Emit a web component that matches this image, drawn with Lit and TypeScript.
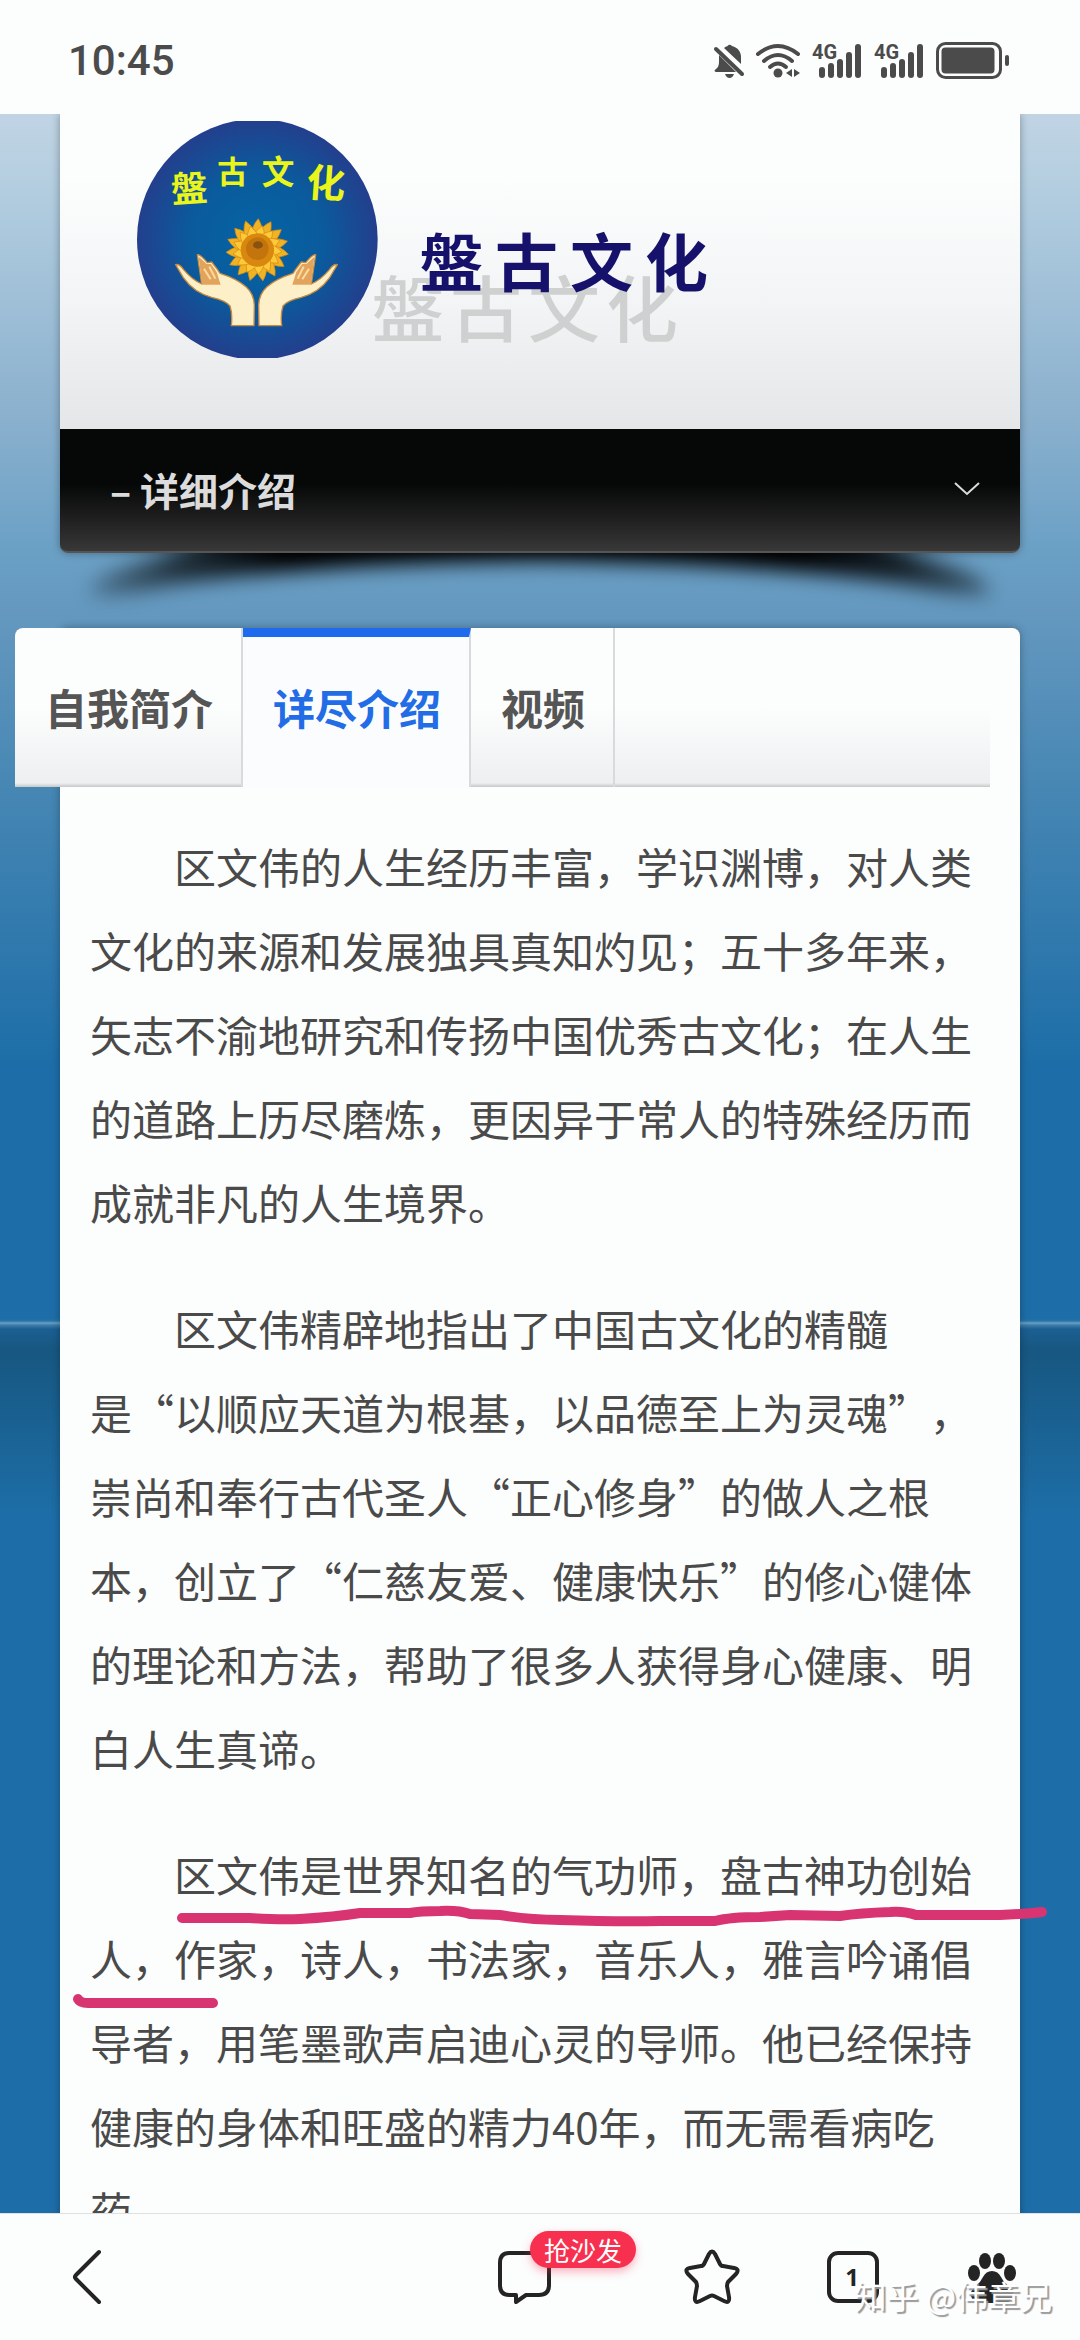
import { LitElement, html, css, svg } from "lit";
import { customElement, state } from "lit/decorators.js";
import { classMap } from "lit/directives/class-map.js";

const fontStack = css`"Noto Sans CJK SC", "Noto Sans", sans-serif`;

@customElement("status-bar")
class StatusBar extends LitElement {
  static styles = css`
    :host {
      display: flex;
      align-items: center;
      justify-content: space-between;
      box-sizing: border-box;
      height: 114px;
      padding: 8px 70px 0 68px;
      background: #fcfdfd;
      color: #4b4b4b;
    }
    .time {
      font: 500 42px/48px Roboto, sans-serif;
    }
    .icons {
      display: flex;
      align-items: center;
      gap: 12px;
    }
    .icons svg {
      display: block;
      overflow: visible;
      fill: #4b4b4b;
    }
    .net {
      font: 700 20px Roboto, sans-serif;
    }
  `;

  private signal() {
    return html`<svg width="50" height="36" viewBox="0 0 50 36" role="img" aria-label="4G">
      <text class="net" x="0" y="16">4G</text>
      <rect x="7" y="24" width="6" height="11" rx="3" />
      <rect x="16" y="20" width="6" height="15" rx="3" />
      <rect x="25" y="16" width="6" height="19" rx="3" />
      <rect x="34" y="9" width="6" height="26" rx="3" />
      <rect x="43" y="1" width="6" height="34" rx="3" />
    </svg>`;
  }

  render() {
    return html`
      <span class="time">10:45</span>
      <div class="icons">
        <svg width="30" height="36" viewBox="0 0 30 36" aria-hidden="true">
          <path d="M10 5 C12 3.500 13 3.200 13.500 3 Q15.500 0.500 18 3 C24 4.500 27 9 27 14 V21 Z" />
          <path d="M5 12 L22 29 H2 Q-1 28 2 26 Q5 24 5 19 Z" />
          <path d="M11 31 H20 Q18.500 35 15.500 35 Q12.500 35 11 31 Z" />
          <path d="M2 6 L28 31" fill="none" stroke="#4b4b4b" stroke-width="4" stroke-linecap="round" />
        </svg>
        <svg width="44" height="36" viewBox="0 0 44 36" aria-hidden="true">
          <g fill="none" stroke="#4b4b4b" stroke-width="4" stroke-linecap="round">
            <path d="M2 11 Q22 -5 42 11" />
            <path d="M8 18 Q22 6 36 18" />
            <path d="M14 24 Q22 17 30 24" />
          </g>
          <circle cx="22" cy="30" r="4.500" />
          <path d="M36 26 V34 L30 30 Z M38 26 V34 L44 30 Z" />
        </svg>
        ${this.signal()} ${this.signal()}
        <svg width="74" height="38" viewBox="0 0 74 38" aria-hidden="true">
          <rect x="1.500" y="1.500" width="63" height="34" rx="8" fill="none" stroke="#4b4b4b" stroke-width="3" />
          <rect x="5.500" y="5.500" width="53" height="26" rx="4" />
          <rect x="69" y="13" width="4" height="11" rx="2" />
        </svg>
      </div>
    `;
  }
}

@customElement("site-emblem")
class SiteEmblem extends LitElement {
  static styles = css`
    :host {
      display: block;
    }
    svg {
      display: block;
    }
    .script {
      font-family: "Noto Sans CJK SC", sans-serif;
      font-weight: 700;
      fill: #e9f51b;
      text-anchor: middle;
    }
  `;

  private petals(count: number, radius: number, color: string, turn: number) {
    return Array.from({ length: count }, (_, i) => {
      const angle = (360 / count) * i + turn;
      return svg`<path d="M-20 -30 Q-20 ${-radius + 24} 3 ${-radius} Q20 ${-radius + 30} 18 -30 Z"
        fill=${color} stroke="#d98a12" stroke-width="2"
        transform="translate(412 420) rotate(${angle})" />`;
    });
  }

  private hand() {
    return svg`
      <path d="M167 464 Q178 461 190 478 Q215 508 245 522 L232 434 Q240 432 262 458 L275 456 L292 478 L300 490
        Q350 506 378 530 Q402 552 403 585 L402 647 H334 Q338 612 330 588 Q318 572 275 562 Q222 548 190 503 Z"
        fill="#fdf0c8" stroke="#c5893f" stroke-width="4" stroke-linejoin="round" />
      <path d="M236 440 L260 462 L273 462 L290 486 L302 524 H246 Z" fill="#e2a45c" />
      <path d="M252 476 L272 508 M268 470 L286 506" stroke="#f9dca0" stroke-width="6" />`;
  }

  render() {
    return html`<svg width="241" height="237" viewBox="51 33 723 711" role="img" aria-label="盤古文化">
      <defs>
        <radialGradient id="disc">
          <stop offset="0" stop-color="#0564a4" />
          <stop offset="0.55" stop-color="#0a5b9d" />
          <stop offset="1" stop-color="#233f8d" />
        </radialGradient>
      </defs>
      <circle cx="412" cy="388" r="361" fill="url(#disc)" />
      <g class="script">
        <text x="208" y="275" font-size="108" transform="rotate(-4 208 235)">盤</text>
        <text x="338" y="220" font-size="92">古</text>
        <text x="474" y="222" font-size="98">文</text>
        <text x="618" y="262" font-size="116" transform="rotate(4 618 220)">化</text>
      </g>
      ${svg`<g>${this.petals(15, 94, "#f0b323", 0)}${this.petals(13, 74, "#fbc93a", 9)}</g>`}
      <circle cx="412" cy="420" r="50" fill="#d8880f" />
      <circle cx="412" cy="416" r="34" fill="#c4740c" />
      <ellipse cx="414" cy="405" rx="15" ry="11" fill="#8a5210" />
      ${svg`<g>${this.hand()}</g><g transform="translate(819 0) scale(-1 1)">${this.hand()}</g>`}
    </svg>`;
  }
}

@customElement("bottom-nav")
class BottomNav extends LitElement {
  static styles = css`
    :host {
      position: relative;
      display: block;
      background: #fcfdfd;
      border-top: 1px solid #dfe1e1;
      font-family: ${fontStack};
    }
    nav {
      display: flex;
      align-items: center;
      gap: 84px;
      height: 126px;
      padding: 0 60px;
    }
    button {
      position: relative;
      display: block;
      width: 56px;
      height: 56px;
      padding: 0;
      border: 0;
      background: none;
      color: #242424;
    }
    .back {
      margin-right: auto;
    }
    .comment {
      width: 104px;
    }
    svg {
      display: block;
      fill: none;
      stroke: #242424;
      stroke-width: 4;
      stroke-linejoin: round;
      stroke-linecap: round;
    }
    .solid {
      fill: #242424;
      stroke: none;
    }
    .badge {
      position: absolute;
      left: 34px;
      top: -18px;
      padding: 0 14px;
      border-radius: 19px;
      background: #f8304f;
      box-shadow: 0 4px 8px rgba(248, 48, 79, 0.35);
      color: #fff;
      font: 400 26px/37px ${fontStack};
      white-space: nowrap;
    }
    .count {
      position: absolute;
      inset: 0;
      font: 700 24px/56px "Noto Sans", sans-serif;
      text-align: center;
    }
    .mark {
      position: absolute;
      right: 28px;
      bottom: 22px;
      color: #fff;
      font-size: 32px;
      line-height: 46px;
      text-shadow: 2px 2px 1px #999;
      white-space: nowrap;
    }
  `;

  render() {
    return html`
      <nav>
        <button class="back" aria-label="返回">
          <svg width="56" height="56" viewBox="0 0 56 56"><path d="M39 3 L16 26 Q14 28 16 30 L39 53" /></svg>
        </button>
        <button class="comment">
          <svg width="56" height="56" viewBox="0 0 56 56">
            <path d="M13 4 H43 Q53 4 53 14 V36 Q53 46 43 46 H30 L20 53 V46 H13 Q4 46 4 36 V14 Q4 4 13 4 Z" />
          </svg>
          <span class="badge">抢沙发</span>
        </button>
        <button aria-label="收藏">
          <svg width="56" height="56" viewBox="0 0 56 56">
            <path
              d="M25 5 Q28 0 31 5 L36 15 Q37 17 39 17 L50 19 Q56 20 52 25 L44 33 Q43 35 43 37 L45 48 Q46 55 40 52 L30 47 Q28 46 26 47 L16 52 Q10 55 11 48 L13 37 Q13 35 12 33 L4 25 Q0 20 6 19 L17 17 Q19 17 20 15 Z"
            />
          </svg>
        </button>
        <button aria-label="标签页">
          <svg width="56" height="56" viewBox="0 0 56 56"><rect x="5" y="4" width="48" height="48" rx="9" /></svg>
          <span class="count">1</span>
        </button>
        <button aria-label="百度">
          <svg class="solid" width="56" height="56" viewBox="0 0 56 56">
            <ellipse cx="21" cy="12" rx="6" ry="8" />
            <ellipse cx="35" cy="12" rx="6" ry="8" />
            <ellipse cx="10" cy="24" rx="6" ry="8" />
            <ellipse cx="46" cy="24" rx="6" ry="8" />
            <path d="M28 22 Q34 22 37 28 Q40 34 44 37 Q50 41 49 47 Q47 55 38 54 H18 Q9 55 7 47 Q6 41 12 37 Q16 34 19 28 Q22 22 28 22 Z" />
          </svg>
        </button>
      </nav>
      <span class="mark">知乎 @伟章兄</span>
    `;
  }
}

@customElement("app-root")
class AppRoot extends LitElement {
  @state() private active = 1;

  private tabs = ["自我简介", "详尽介绍", "视频"];

  static styles = css`
    :host {
      display: flex;
      flex-direction: column;
      height: 100vh;
      overflow: hidden;
      font-family: ${fontStack};
      color: #4a4a4a;
    }
    .page {
      position: relative;
      flex: 1;
      min-height: 0;
      overflow: hidden;
      padding: 0 60px;
      background:
        linear-gradient(#1d6ea8 0, #2a75aa 2px, #6a9fc3 4px, #3f7eab 6px, #1b5f92 10px, #175781 30px, #1d6ea8 200px) 0 1205px / 100% 200px
          no-repeat,
        linear-gradient(#c0d4e4 0, #b4cee0 70px, #88afcd 315px, #6ca1c6 430px, #6498bf 500px, #4485b3 690px, #1d6ea8 950px);
    }
    .hero {
      position: relative;
      z-index: 1;
      border-radius: 0 0 8px 8px;
      box-shadow: 0 0 8px rgba(0, 0, 0, 0.35);
    }
    .masthead {
      display: flex;
      height: 308px;
      padding: 7px 0 0 77px;
      background: linear-gradient(#fcfdfd 20%, #f3f4f5 60%, #e5e6e7);
    }
    .wordmark {
      position: relative;
      flex: 1;
    }
    .seal,
    .shade {
      position: absolute;
      display: flex;
      margin: 0;
      line-height: 100px;
    }
    .shade {
      left: -6px;
      top: 134px;
      gap: 6px;
      color: #cfd1d1;
      font-size: 72px;
      font-weight: 500;
    }
    .seal {
      left: 42px;
      top: 88px;
      gap: 12px;
      color: #16116b;
      font-size: 63px;
      font-weight: 700;
    }
    .section {
      display: flex;
      align-items: center;
      justify-content: space-between;
      box-sizing: border-box;
      width: 100%;
      height: 124px;
      padding: 0 40px 2px 50px;
      border: 0;
      border-bottom: 2px solid #555;
      border-radius: 0 0 8px 8px;
      background: linear-gradient(#060808 45%, #1c1c1c 70%, #383838);
      color: #dcdcdc;
      font: 700 39px/56px ${fontStack};
    }
    .drop {
      display: block;
      width: 100%;
      height: 75px;
      overflow: visible;
    }
    .card {
      min-height: 1700px;
      padding: 0 30px;
      border-radius: 8px 8px 0 0;
      background: #fcfdfd;
      box-shadow: 0 0 8px rgba(0, 0, 0, 0.3);
    }
    .tabs {
      display: flex;
      height: 159px;
      margin-left: -75px;
      border-radius: 8px 0 0 0;
      background: linear-gradient(#fcfdfd 50%, #eeeff0 155px, #c6c7c8);
    }
    .tab {
      box-sizing: border-box;
      padding: 0 28px 2px 30px;
      border: 0;
      border-right: 2px solid #d9dadb;
      background: none;
      color: #555;
      font: 700 42px/60px ${fontStack};
    }
    .tab.active {
      border-top: 9px solid #1f6bee;
      padding-bottom: 11px;
      background: #fbfcfd;
      color: #226de6;
    }
    .article {
      padding-top: 37px;
      font-size: 42px;
      line-height: 84px;
      text-spacing-trim: space-all;
    }
    p {
      position: relative;
      margin: 0 0 42px;
      text-indent: 2em;
    }
    .pen {
      position: absolute;
      left: -30px;
      top: 0;
      overflow: visible;
      fill: none;
      stroke: #d93472;
      stroke-width: 10;
      stroke-linecap: round;
      stroke-linejoin: round;
    }
  `;

  render() {
    return html`
      <status-bar></status-bar>
      <main class="page" lang="zh-CN">
        <header class="hero">
          <div class="masthead">
            <site-emblem></site-emblem>
            <div class="wordmark">
              <div class="shade">${[..."盤古文化"].map((c) => html`<span>${c}</span>`)}</div>
              <h1 class="seal">${[..."盤古文化"].map((c) => html`<span>${c}</span>`)}</h1>
            </div>
          </div>
          <button class="section">
            <span>– 详细介绍</span>
            <svg width="26" height="14" viewBox="0 0 26 14" fill="none" stroke="#dcdcdc" stroke-width="2" aria-hidden="true">
              <path d="M1 1 L13 12 L25 1" />
            </svg>
          </button>
        </header>
        <svg class="drop" viewBox="0 0 960 75" preserveAspectRatio="none" aria-hidden="true">
          <defs>
            <linearGradient id="tails">
              <stop offset="0" stop-opacity="0.25" />
              <stop offset="0.1" stop-opacity="0.7" />
              <stop offset="0.22" stop-opacity="1" />
              <stop offset="0.78" stop-opacity="1" />
              <stop offset="0.9" stop-opacity="0.8" />
              <stop offset="1" stop-opacity="0.4" />
            </linearGradient>
            <filter id="soft" x="-10%" y="-60%" width="120%" height="220%"><feGaussianBlur stdDeviation="10" /></filter>
          </defs>
          <path
            d="M30 42 Q28 28 60 16 Q120 -4 180 -30 H780 Q840 -4 900 16 Q930 28 930 42 Q890 42 850 32 Q700 10 480 8 Q260 10 110 32 Q60 44 30 42 Z"
            fill="url(#tails)"
            filter="url(#soft)"
          />
        </svg>
        <section class="card">
          <div class="tabs" role="tablist">
            ${this.tabs.map(
              (label, i) => html`<button
                role="tab"
                aria-selected=${i === this.active}
                class=${classMap({ tab: true, active: i === this.active })}
                @click=${() => (this.active = i)}
              >
                ${label}
              </button>`
            )}
          </div>
          <article class="article">
            <p>
              区文伟的人生经历丰富，学识渊博，对人类文化的来源和发展独具真知灼见；五十多年来，矢志不渝地研究和传扬中国优秀古文化；在人生的道路上历尽磨炼，更因异于常人的特殊经历而成就非凡的人生境界。
            </p>
            <p>
              区文伟精辟地指出了中国古文化的精髓<br />是“以顺应天道为根基，以品德至上为灵魂”，崇尚和奉行古代圣人“正心修身”的做人之根本，创立了“仁慈友爱、健康快乐”的修心健体的理论和方法，帮助了很多人获得身心健康、明白人生真谛。
            </p>
            <p>
              区文伟是世界知名的气功师，盘古神功创始人，作家，诗人，书法家，音乐人，雅言吟诵倡导者，用笔墨歌声启迪心灵的导师。他已经保持健康的身体和旺盛的精力40年，而无需看病吃药。
              <svg class="pen" width="990" height="180" viewBox="0 0 990 180" aria-hidden="true">
                <path
                  d="M122 86 H190 Q220 88 240 87 Q275 85 300 81 H350 Q360 79 380 79 Q398 78 410 82 L440 83 Q470 88 500 88 Q560 90 600 89 H655 Q670 85 700 85 L730 83 L780 84 Q800 81 830 80 Q845 79 856 83 H940 Q965 82 982 80"
                />
                <path d="M18 167 Q20 171 28 171 H153" />
              </svg>
            </p>
          </article>
        </section>
      </main>
      <bottom-nav></bottom-nav>
    `;
  }
}
